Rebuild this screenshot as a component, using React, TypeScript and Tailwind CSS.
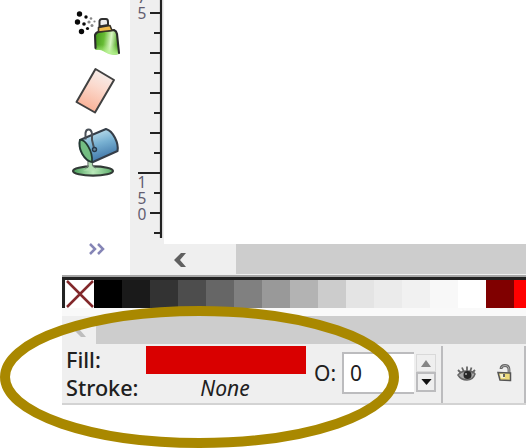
import React from "react";

const swatches = [
  "bg-black", "bg-[#1a1a1a]", "bg-[#333333]", "bg-[#4d4d4d]", "bg-[#666666]", "bg-[#808080]",
  "bg-[#999999]", "bg-[#b3b3b3]", "bg-[#cccccc]", "bg-[#e4e4e4]", "bg-[#ebebeb]", "bg-[#f1f1f1]",
  "bg-[#f8f8f8]", "bg-white", "bg-[#800000]", "bg-[#ff0000]",
];

function SprayIcon() {
  return (
    <svg className="block" width="48" height="48" viewBox="0 0 48 48">
      <defs>
        <linearGradient id="can" x1="0" x2="1" y1="0" y2=".15">
          <stop offset="0" stopColor="#3f9318" />
          <stop offset=".4" stopColor="#68bd35" />
          <stop offset=".7" stopColor="#d9f5c4" />
          <stop offset="1" stopColor="#4da41f" />
        </linearGradient>
        <linearGradient id="canFade" x1="0" x2="0" y1="0" y2="1">
          <stop offset=".6" stopColor="#b5f38e" stopOpacity="0" />
          <stop offset="1" stopColor="#b5f38e" />
        </linearGradient>
      </defs>
      <g fill="#080808">
        <circle cx="5.5" cy="7" r="2.7" /><circle cx="3.5" cy="15" r="2.7" /><circle cx="7.5" cy="24.5" r="2.7" />
        <circle cx="12" cy="10" r="1.7" /><circle cx="10" cy="17" r="1.8" /><circle cx="13.5" cy="21.5" r="1.6" />
      </g>
      <g fill="#888">
        <circle cx="15" cy="15" r="1.6" /><circle cx="17" cy="11.5" r="1.3" /><circle cx="18" cy="18.5" r="1.5" /><circle cx="20.5" cy="14.5" r="1.1" />
      </g>
      <path d="M21.5 27Q24 24 40 23L43 26L45 47Q36 49 31 45Q27 42 21.5 43Z" fill="url(#can)" />
      <path d="M21.5 27Q24 24 40 23L43 26L45 47Q36 49 31 45Q27 42 21.5 43Z" fill="url(#canFade)" />
      <path d="M21.5 41L21 28Q22 25 26 24.5L40 23Q42.500 24 43 27L45 46" fill="none" stroke="#2a2a2a" strokeWidth="2.1" strokeLinecap="round" />
      <path d="M24.500 25V20.500L36 18.500L38 23.500Z" fill="#f0ba4b" stroke="#3b3427" strokeWidth="1.6" strokeLinejoin="round" />
      <path d="M25.500 19.500L25.500 14Q26 11.500 29 12H32Q34 12 34 15V18Z" fill="#eee" stroke="#303030" strokeWidth="2" />
    </svg>
  );
}

function EraserIcon() {
  return (
    <svg className="block" width="48" height="50" viewBox="0 0 48 50">
      <defs>
        <linearGradient id="rubber" x1=".7" y1="0" x2=".3" y2="1">
          <stop stopColor="#f5f0ee" /><stop offset=".4" stopColor="#fbdace" /><stop offset="1" stopColor="#f9ad91" />
        </linearGradient>
      </defs>
      <path d="M22.500 5L41 16L22 48.500L3.500 38Z" fill="url(#rubber)" stroke="#414141" strokeWidth="2" strokeLinejoin="round" />
    </svg>
  );
}

function BucketIcon() {
  return (
    <svg className="block" width="52" height="52" viewBox="0 0 52 52">
      <defs>
        <linearGradient id="bucket" x1=".3" y1="0" x2=".65" y2="1">
          <stop stopColor="#c9e6f0" /><stop offset=".45" stopColor="#78b1d2" /><stop offset="1" stopColor="#376da2" />
        </linearGradient>
        <linearGradient id="paint"><stop stopColor="#469c58" /><stop offset=".5" stopColor="#bae9ba" /><stop offset="1" stopColor="#59aa68" /></linearGradient>
      </defs>
      <ellipse cx="22" cy="45" rx="20" ry="4.6" fill="url(#paint)" stroke="#323a36" strokeWidth="2.1" />
      <path d="M17.500 33V41Q16 44 12 44.500H29Q22 43 21.500 38V34Z" fill="#b2dfb2" />
      <path d="M17 34V40Q16 42 14 42M21.500 37V39Q22 41 25 42" fill="none" stroke="#64766a" strokeWidth="1.2" />
      <path d="M9 14L35 3C42 5 48 17 46.500 25L22 36C13 35 7 23 9 14Z" fill="url(#bucket)" stroke="#353e48" strokeWidth="2.1" strokeLinejoin="round" />
      <path d="M9 14C14 13 22 25 21 36C13 34 7 23 9 14Z" fill="#73bd82" stroke="#233a32" strokeWidth="1.7" />
      <path d="M14.500 13.500V7Q15 3.500 17.500 3.500Q20.500 3.500 21 8V14L23 22" fill="none" stroke="#4a5158" strokeWidth="2" />
      <circle cx="23.500" cy="23.500" r="2" fill="#6b8ba0" stroke="#26394a" strokeWidth="1.4" />
    </svg>
  );
}

function Ruler() {
  const ticks = [13, 33, 53, 73, 93, 113, 133, 153, 173, 193, 213, 233];
  return (
    <svg className="block shrink-0 bg-[#efefef]" width="34" height="244" viewBox="0 0 34 244">
      <path d="M31 0V238" stroke="#222" strokeWidth="2.2" />
      {ticks.map((y, i) => (
        <path key={y} d={"M" + (y === 173 ? 8 : i % 2 ? 24 : 20) + " " + y + "H31"} stroke="#222" strokeWidth="2" />
      ))}
      <g fill="#625d70" fontFamily="Noto Sans, sans-serif" fontSize="15.500" textAnchor="middle">
        <text x="12" y="3">7</text><text x="12" y="19">5</text>
        <text x="12" y="188">1</text><text x="12" y="204">5</text><text x="12" y="220">0</text>
      </g>
    </svg>
  );
}

function EyeIcon() {
  return (
    <svg className="block" width="20" height="17" viewBox="0 0 20 17">
      <path d="M1 10Q4 6 10 6Q16 6 18 9Q16 15 10 15Q4 15 1 10Z" fill="#aaa" stroke="#666" strokeWidth="1.5" />
      <path d="M4 8L1 5M7 7L5 2.500M10 6V1.500M13 7L14.500 2.500M15 8L18 5" stroke="#666" strokeWidth="1.8" />
      <circle cx="10.500" cy="10" r="4" fill="#282828" /><circle cx="9" cy="9" r="1" fill="#aaa" />
    </svg>
  );
}

function LockIcon() {
  return (
    <svg className="block" width="16" height="18" viewBox="0 0 16 18">
      <path d="M4 5Q4 1.500 8 1.500Q12 1.500 12 6V9" fill="none" stroke="#666" strokeWidth="2.8" />
      <path d="M4 4Q5 1.500 8 1.500Q12 1.500 12 6V9" fill="none" stroke="#c0c0c0" strokeWidth=".8" />
      <path d="M1 8.500L13.500 9V16.500L3 16Z" fill="#eddb7b" stroke="#555" strokeWidth="1.5" />
      <path d="M3 10H8V14H4Z" fill="#f4f0ce" /><path d="M7 10V13" stroke="#555" strokeWidth="1.8" />
    </svg>
  );
}

export default function App() {
  return (
    <main className="relative h-[448px] w-[526px] overflow-hidden bg-white font-['Noto_Sans',sans-serif] text-[#202020]">
      <div className="ml-[62px] w-[464px]">
        <section className="flex h-[275px]">
          <aside className="flex w-[68px] shrink-0 flex-col bg-white">
            <div className="pl-3 pt-[7px]"><SprayIcon /></div>
            <div className="pl-[11px] pt-[9px]"><EraserIcon /></div>
            <div className="pl-[9px] pt-[12px]"><BucketIcon /></div>
            <svg className="ml-[26px] mt-[65px] block" width="18" height="12" viewBox="0 0 18 12">
              <path d="M2 1L7 6L2 11M10 1L15 6L10 11" fill="none" stroke="#8585b6" strokeWidth="2.500" />
            </svg>
          </aside>
          <div className="flex flex-1 flex-col">
            <div className="flex h-[244px]"><Ruler /><div className="flex-1 bg-white" /></div>
            <div className="flex h-[31px] bg-[#efefef]">
              <div className="flex w-[106px] items-center pl-[43px]">
                <svg className="block" width="14" height="16" viewBox="0 0 14 16"><path d="M8 1H13L7 8L13 15H8L1 8Z" fill="#606060" /></svg>
              </div>
              <div className="h-[30px] flex-1 bg-[#cdcdcd]" />
            </div>
          </div>
        </section>

        <section className="flex h-[41px] flex-col bg-[#f9f9f9]">
          <div className="h-0.5 bg-[#a6a6a6]" />
          <div className="flex h-[31px] border-l-[3px] border-t-[3px] border-[#222] pl-px">
            <svg className="block w-7 shrink-0 bg-white" height="28" viewBox="0 0 28 28"><path d="M1 1L27 27M27 1L1 27" stroke="#82282b" strokeWidth="2.500" /></svg>
            {swatches.map((color, i) => <div key={i} className={"h-7 w-7 shrink-0 last:w-3 " + color} />)}
          </div>
        </section>

        <div className="flex h-7 bg-[#efefef]">
          <div className="w-[34px] pl-[11px] pt-[6px]">
            <svg className="block" width="14" height="16" viewBox="0 0 14 16"><path d="M8 1H13L7 8L13 15H8L1 8Z" fill="#bdbdbd" /></svg>
          </div>
          <div className="flex-1 bg-[#cdcdcd]" />
        </div>

        <footer className="flex h-[61px] border-b-2 border-[#d3d3d3] bg-[#efefef]">
          <div className="w-[84px] shrink-0 pl-1 pt-[2px] text-[21px] font-medium leading-7">
            <div className="origin-left scale-x-[1.03]">Fill:</div>
            <div className="origin-left scale-x-[1.03]">Stroke:</div>
          </div>
          <div className="w-[160px] shrink-0 pt-0.5">
            <div className="h-7 bg-[#d90000]" />
            <div className="pr-0.5 text-center text-[21px] italic leading-[28px]">None</div>
          </div>
          <div className="w-[36px] shrink-0 pl-2 pt-[15px] text-[21px] leading-7">O:</div>
          <div className="mt-2 h-[42px] w-[72px] shrink-0 border-y-2 border-l-2 border-[#bcbcbe] bg-white pl-1.5 text-[21px] leading-[38px]">0</div>
          <div className="ml-[2px] mt-[10px] flex h-[38px] w-5 flex-col">
            <div className="flex h-[18px] items-center justify-center border border-[#d9d9d9]">
              <svg className="block" width="10" height="7" viewBox="0 0 10 7"><path d="M0 7L5 0L10 7Z" fill="#858585" /></svg>
            </div>
            <div className="flex h-5 items-center justify-center border-2 border-[#bcbcbe]">
              <svg className="block" width="11" height="6" viewBox="0 0 12 7"><path d="M0 0H12L6 7Z" fill="#111" /></svg>
            </div>
          </div>
          <div className="ml-[5px] mt-0.5 flex h-[57px] flex-1 border-x-2 border-[#bcbcbe] pl-[14px] pt-[19px]">
            <EyeIcon /><div className="-mt-px ml-5"><LockIcon /></div>
          </div>
        </footer>
      </div>
      <svg className="pointer-events-none absolute inset-0" width="526" height="448" viewBox="0 0 526 448">
        <ellipse cx="199.500" cy="377" rx="194.500" ry="66" fill="none" stroke="#a98800" strokeWidth="10" />
      </svg>
    </main>
  );
}
